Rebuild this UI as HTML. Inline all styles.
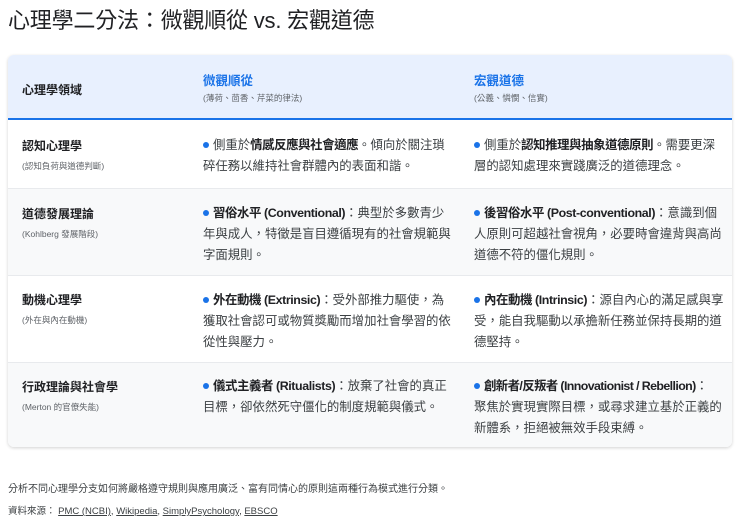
<!DOCTYPE html>
<html><head><meta charset="utf-8"><style>
body{margin:0;background:#fff;font-family:"Liberation Sans","Noto Sans CJK TC",sans-serif;color:#202124;width:740px;height:521px;overflow:hidden;position:relative}
h1{position:absolute;left:8px;top:3px;margin:0;font-size:22px;font-weight:400;color:#202124;letter-spacing:-0.2px}
.card{position:absolute;left:8px;top:55px;width:724px;height:392px;border-radius:6px;box-shadow:0 1px 3px rgba(0,0,0,.18);overflow:hidden;background:#fff}
.hd{position:absolute;left:0;top:0;width:724px;height:63px;background:#e8f0fe;border-bottom:2px solid #1a73e8}
.row{position:absolute;left:0;width:724px;border-bottom:1px solid #e8eaed}
.c{position:absolute}
.t1{font-size:12px;font-weight:700;color:#202124}
.s{font-size:8.5px;color:#5f6368}
.hb{font-size:12.5px;font-weight:700;color:#1a73e8}
.p{font-size:12.4px;line-height:21px;color:#3c4043;white-space:nowrap}
.p b{color:#202124;letter-spacing:-0.4px}
.dot{display:inline-block;width:6px;height:6px;border-radius:50%;background:#1a73e8;margin:0 4px 1px 0;vertical-align:middle}
.f{position:absolute;left:8px;font-size:10px;color:#3c4043}
.f u{color:#3c4043}
</style></head><body>
<h1>心理學二分法：微觀順從 vs. 宏觀道德</h1>
<div class="card">
<div class="hd">
<div class="c t1" style="left:14px;top:26px">心理學領域</div>
<div class="c hb" style="left:195px;top:15px">微觀順從</div>
<div class="c s" style="left:195px;top:37px">(薄荷、茴香、芹菜的律法)</div>
<div class="c hb" style="left:466px;top:15px">宏觀道德</div>
<div class="c s" style="left:466px;top:37px">(公義、憐憫、信實)</div>
</div>
<div class="row" style="top:65px;height:68px;background:#fff">
<div class="c t1" style="left:14px;top:17px">認知心理學</div>
<div class="c s" style="left:14px;top:40px">(認知負荷與道德判斷)</div>
<div class="c p" style="left:195px;top:15px"><span class="dot"></span>側重於<b>情感反應與社會適應</b>。傾向於關注瑣<br>碎任務以維持社會群體內的表面和諧。</div>
<div class="c p" style="left:466px;top:15px"><span class="dot"></span>側重於<b>認知推理與抽象道德原則</b>。需要更深<br>層的認知處理來實踐廣泛的道德理念。</div>
</div>
<div class="row" style="top:134px;height:86px;background:#f8f9fa">
<div class="c t1" style="left:14px;top:16px">道德發展理論</div>
<div class="c s" style="left:14px;top:39px">(Kohlberg 發展階段)</div>
<div class="c p" style="left:195px;top:14px"><span class="dot"></span><b>習俗水平 (Conventional)</b>：典型於多數青少<br>年與成人，特徵是盲目遵循現有的社會規範與<br>字面規則。</div>
<div class="c p" style="left:466px;top:14px"><span class="dot"></span><b>後習俗水平 (Post-conventional)</b>：意識到個<br>人原則可超越社會視角，必要時會違背與高尚<br>道德不符的僵化規則。</div>
</div>
<div class="row" style="top:221px;height:86px;background:#fff">
<div class="c t1" style="left:14px;top:15px">動機心理學</div>
<div class="c s" style="left:14px;top:38px">(外在與內在動機)</div>
<div class="c p" style="left:195px;top:14px"><span class="dot"></span><b>外在動機 (Extrinsic)</b>：受外部推力驅使，為<br>獲取社會認可或物質獎勵而增加社會學習的依<br>從性與壓力。</div>
<div class="c p" style="left:466px;top:14px"><span class="dot"></span><b>內在動機 (Intrinsic)</b>：源自內心的滿足感與享<br>受，能自我驅動以承擔新任務並保持長期的道<br>德堅持。</div>
</div>
<div class="row" style="top:308px;height:84px;background:#f8f9fa;border:0">
<div class="c t1" style="left:14px;top:15px">行政理論與社會學</div>
<div class="c s" style="left:14px;top:38px">(Merton 的官僚失能)</div>
<div class="c p" style="left:195px;top:13px"><span class="dot"></span><b>儀式主義者 (Ritualists)</b>：放棄了社會的真正<br>目標，卻依然死守僵化的制度規範與儀式。</div>
<div class="c p" style="left:466px;top:13px"><span class="dot"></span><b style="letter-spacing:-0.6px">創新者/反叛者 (Innovationist / Rebellion)</b>：<br>聚焦於實現實際目標，或尋求建立基於正義的<br>新體系，拒絕被無效手段束縛。</div>
</div>
</div>
<div class="f" style="top:480px">分析不同心理學分支如何將嚴格遵守規則與應用廣泛、富有同情心的原則這兩種行為模式進行分類。</div>
<div class="f" style="top:503px;font-size:9.5px">資料來源： <u>PMC (NCBI)</u>, <u>Wikipedia</u>, <u>SimplyPsychology</u>, <u>EBSCO</u></div>
</body></html>
